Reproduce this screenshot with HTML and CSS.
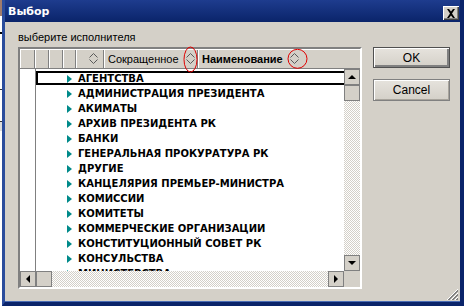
FILE: index.html
```html
<!DOCTYPE html>
<html>
<head>
	<title>Выбор</title>
	<meta charset="utf-8">
	<link rel="stylesheet" href="styles.css">
</head>
<body>
	<div class="desk">
		<div class="behind"></div>
		<div class="window">
			<div class="title_bar">
				<span class="title_text">Выбор</span>
				<span class="close_btn">
					<svg width="10" height="9" viewBox="0 0 10 9"><path d="M1 0h2l2 2.5 2-2.5h2l-3 4.5 3 4.5h-2l-2-2.5-2 2.5h-2l3-4.5z" fill="#000"/></svg>
				</span>
			</div>
			<div class="dlg_body">
				<div class="picker">
					<div class="picker_label">выберите исполнителя</div>
					<div class="grid">
						<div class="grid_head">
							<div class="hcell w15"></div>
							<div class="hcell w14"></div>
							<div class="hcell w14"></div>
							<div class="hcell w13"></div>
							<div class="hcell w28 sort_only">
								<svg class="sort_ico" width="9" height="11" viewBox="0 0 9 11"><path d="M0.5 4.5l4-4 4 4M0.5 6.5l4 4 4-4" fill="none" stroke="#5a5a5a"/></svg>
							</div>
							<div class="hcell w94">
								<span class="hcell_text">Сокращенное</span>
								<svg class="sort_ico" width="9" height="11" viewBox="0 0 9 11"><path d="M0.5 4.5l4-4 4 4M0.5 6.5l4 4 4-4" fill="none" stroke="#5a5a5a"/></svg>
							</div>
							<div class="hcell grow">
								<span class="hcell_text bold">Наименование</span>
								<svg class="sort_ico" width="9" height="11" viewBox="0 0 9 11"><path d="M0.5 4.5l4-4 4 4M0.5 6.5l4 4 4-4" fill="none" stroke="#5a5a5a"/></svg>
							</div>
						</div>
						<div class="grid_rows">
							<div class="indicator_col"></div>
							<div class="row_list">
								<div class="row sel"><span class="arrow"></span>АГЕНТСТВА</div>
								<div class="row"><span class="arrow"></span>АДМИНИСТРАЦИЯ ПРЕЗИДЕНТА</div>
								<div class="row"><span class="arrow"></span>АКИМАТЫ</div>
								<div class="row"><span class="arrow"></span>АРХИВ ПРЕЗИДЕНТА РК</div>
								<div class="row"><span class="arrow"></span>БАНКИ</div>
								<div class="row"><span class="arrow"></span>ГЕНЕРАЛЬНАЯ ПРОКУРАТУРА РК</div>
								<div class="row"><span class="arrow"></span>ДРУГИЕ</div>
								<div class="row"><span class="arrow"></span>КАНЦЕЛЯРИЯ ПРЕМЬЕР-МИНИСТРА</div>
								<div class="row"><span class="arrow"></span>КОМИССИИ</div>
								<div class="row"><span class="arrow"></span>КОМИТЕТЫ</div>
								<div class="row"><span class="arrow"></span>КОММЕРЧЕСКИЕ ОРГАНИЗАЦИИ</div>
								<div class="row"><span class="arrow"></span>КОНСТИТУЦИОННЫЙ СОВЕТ РК</div>
								<div class="row"><span class="arrow"></span>КОНСУЛЬСТВА</div>
								<div class="row"><span class="arrow"></span>МИНИСТЕРСТВА</div>
							</div>
						</div>
						<div class="vscroll">
							<div class="sbtn"><span class="tri up"></span></div>
							<div class="sthumb"></div>
							<div class="strack"></div>
							<div class="sbtn"><span class="tri down"></span></div>
						</div>
						<div class="hscroll">
							<div class="sbtn"><span class="tri left"></span></div>
							<div class="sthumb"></div>
							<div class="strack"></div>
							<div class="sbtn"><span class="tri right"></span></div>
						</div>
						<div class="corner"></div>
					</div>
				</div>
				<div class="buttons">
					<div class="btn default">OK</div>
					<div class="btn">Cancel</div>
				</div>
			</div>
			<svg class="grip" width="13" height="13" viewBox="0 0 13 13">
				<path d="M12 1L1 12M12 5L5 12M12 9L9 12" stroke="#fff" stroke-width="1"/>
				<path d="M12 2L2 12M12 3L3 12M12 6L6 12M12 7L7 12M12 10L10 12M12 11L11 12" stroke="#808080" stroke-width="1"/>
			</svg>
		</div>
	</div>
	<svg class="marks" width="464" height="306" viewBox="0 0 464 306">
		<ellipse cx="190.5" cy="59.5" rx="6.5" ry="12.5" fill="none" stroke="#e00000" stroke-width="1"/>
		<ellipse cx="297.5" cy="58.8" rx="9.5" ry="9.5" fill="none" stroke="#e00000" stroke-width="1"/>
	</svg>
</body>
</html>
```

FILE: styles.css
```css
*{
	box-sizing:border-box;
	margin:0;
	padding:0;
}
body{
	width:464px;
	height:306px;
	overflow:hidden;
	background:#fff;
	font-family:"Liberation Sans",Arial,sans-serif;
	font-size:11px;
	color:#000;
}
.desk{
	display:flex;
	height:306px;
}
.behind{
	width:2px;
	background:linear-gradient(#a07c6c 0 16px,#fff 16px 32px,#000 32px 34px,#fff 34px 89px,#333 89px 90px,#fff 90px 121px,#333 121px 122px,#dcdcdc 122px 131px,#fff 131px);
}
.window{
	position:relative;
	flex:1;
	display:flex;
	flex-direction:column;
	background:#d4d0c8;
	border-left:3px solid #2a4c9c;
	border-right:4px solid #0a246a;
	border-bottom:4px solid #0a246a;
	box-shadow:inset 0 -1px #4a6cb4;
}
.title_bar{
	height:22px;
	display:flex;
	align-items:center;
	justify-content:space-between;
	padding:0 1px 0 3px;
	background:linear-gradient(#1e3c8e,#0a246a);
}
.title_text{
	color:#fff;
	font-weight:bold;
	font-size:11px;
	font-family:"DejaVu Sans",sans-serif;
}
.close_btn{
	width:16px;
	height:14px;
	margin-top:4px;
	display:flex;
	align-items:center;
	justify-content:center;
	background:#d4d0c8;
	box-shadow:inset 1px 1px #fff,inset -1px -1px #404040,inset -2px -2px #808080;
}
.dlg_body{
	display:flex;
	padding:8px 0 0 13px;
}
.picker{
	width:344px;
}
.picker_label{
	height:17px;
	line-height:15px;
	font-size:11px;
}
.grid{
	width:344px;
	height:242px;
	border:2px solid;
	border-color:#808080 #fff #fff #808080;
	display:grid;
	grid-template-columns:324px 16px;
	grid-template-rows:20px 202px 16px;
	background:#d4d0c8;
}
.grid_head{
	grid-column:1 / 3;
	display:flex;
	border-bottom:1px solid #808080;
}
.hcell{
	height:19px;
	display:flex;
	align-items:center;
	box-shadow:inset 1px 1px #fff,inset -1px 0 #808080;
	padding-left:4px;
}
.w15{width:15px;}
.w14{width:14px;}
.w13{width:13px;}
.w28{width:28px;}
.w94{width:94px;}
.grow{flex:1;box-shadow:inset 1px 1px #fff;}
.sort_only{justify-content:flex-end;padding-right:3px;}
.hcell_text{
	font-size:11px;
	margin-right:auto;
}
.bold{font-weight:bold;}
.grow .hcell_text{margin-right:7px;}
.sort_ico{
	margin-right:3px;
}
.grid_rows{
	display:flex;
	background:#fff;
	overflow:hidden;
}
.indicator_col{
	width:16px;
	border-right:1px solid #808080;
}
.row_list{
	flex:1;
	padding-top:2px;
}
.row{
	position:relative;
	height:15px;
	display:flex;
	align-items:center;
	padding-left:31px;
	font-family:"DejaVu Sans",sans-serif;
	font-weight:bold;
	font-size:10px;
	white-space:nowrap;
}
.row.sel::before{
	content:"";
	position:absolute;
	left:0;
	right:-2px;
	top:0;
	bottom:1px;
	border:2px solid #000;
}
.arrow{
	width:0;
	height:0;
	border-style:solid;
	border-width:4px 0 4px 5px;
	border-color:transparent transparent transparent #008a8a;
	margin-right:6px;
}
.vscroll{
	display:flex;
	flex-direction:column;
}
.hscroll{
	display:flex;
}
.sbtn,.sthumb{
	width:16px;
	height:16px;
	border:1px solid #808080;
	background:#d4d0c8;
	display:flex;
	align-items:center;
	justify-content:center;
}
.strack{
	flex:1;
	background:repeating-conic-gradient(#d4d0c8 0 25%,#fff 0 50%) 0 0/2px 2px;
}
.tri{
	width:0;
	height:0;
	border-style:solid;
}
.tri.up{border-width:0 4px 4px 4px;border-color:transparent transparent #000 transparent;}
.tri.down{border-width:4px 4px 0 4px;border-color:#000 transparent transparent transparent;}
.tri.left{border-width:4px 4px 4px 0;border-color:transparent #000 transparent transparent;}
.tri.right{border-width:4px 0 4px 4px;border-color:transparent transparent transparent #000;}
.corner{
	background:#d4d0c8;
}
.buttons{
	margin:17px 0 0 11px;
	display:flex;
	flex-direction:column;
	gap:11px;
}
.btn{
	width:77px;
	height:22px;
	display:flex;
	align-items:center;
	justify-content:center;
	font-size:12px;
	border:1px solid #808080;
	background:linear-gradient(#e6e3dd,#d4d0c8);
	box-shadow:inset 1px 1px #fff,inset -1px -1px #a8a49c;
}
.btn.default{
	height:21px;
	border-color:#505050;
	box-shadow:inset 1px 1px #fff,inset -2px -2px #808080;
}
.grip{
	position:absolute;
	right:1px;
	bottom:1px;
}
.marks{
	position:absolute;
	left:0;
	top:0;
}
```
